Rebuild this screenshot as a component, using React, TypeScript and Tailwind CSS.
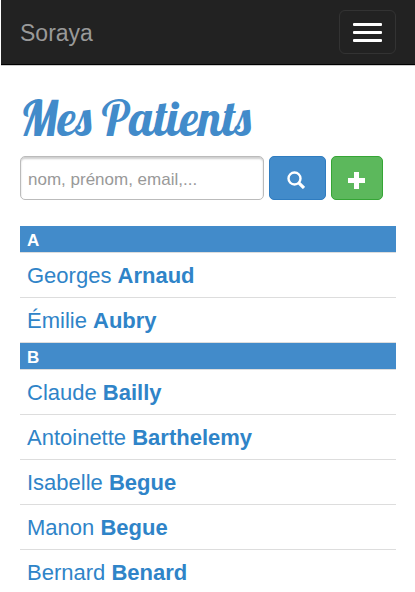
import { useState } from "react";

type Patient = { first: string; last: string };

const groups: { letter: string; patients: Patient[] }[] = [
  {
    letter: "A",
    patients: [
      { first: "Georges", last: "Arnaud" },
      { first: "Émilie", last: "Aubry" },
    ],
  },
  {
    letter: "B",
    patients: [
      { first: "Claude", last: "Bailly" },
      { first: "Antoinette", last: "Barthelemy" },
      { first: "Isabelle", last: "Begue" },
      { first: "Manon", last: "Begue" },
      { first: "Bernard", last: "Benard" },
    ],
  },
];

function Navbar() {
  return (
    <nav className="ml-px flex h-[65px] items-center justify-between border-b border-black bg-[#222222] pr-[19px] pl-[19px] shadow-[0_1px_0_#cccccc]">
      <a href="#" className="pt-0.5 text-[23px] leading-7 text-[#999999]">
        Soraya
      </a>
      <button
        type="button"
        aria-label="Menu"
        className="flex h-11 w-[57px] flex-col items-center justify-center gap-[5px] rounded-md border border-[#333333]"
      >
        <span className="h-[3px] w-[29px] rounded-[1px] bg-white" />
        <span className="h-[3px] w-[29px] rounded-[1px] bg-white" />
        <span className="h-[3px] w-[29px] rounded-[1px] bg-white" />
      </button>
    </nav>
  );
}

function SearchBar() {
  const [query, setQuery] = useState("");

  return (
    <form className="mt-2.5 flex gap-[5px] pr-[13px]" onSubmit={(e) => e.preventDefault()}>
      <input
        type="text"
        aria-label="Rechercher un patient"
        placeholder="nom, prénom, email,..."
        value={query}
        onChange={(e) => setQuery(e.target.value)}
        className="h-11 min-w-0 flex-1 rounded-[5px] border border-[#bbbbbb] bg-white px-[7px] pt-[3px] text-[17px] text-[#555555] shadow-[inset_0_2px_2px_#cfcfcf] outline-none placeholder:text-[#999999]"
      />
      <button
        type="submit"
        aria-label="Rechercher"
        className="flex h-11 w-[57px] items-center justify-center rounded-[5px] border border-[#2f7cc0] bg-[#428bca]"
      >
        <svg viewBox="0 0 18 18" className="mt-1 mr-1 h-[18px] w-[18px]" fill="none" stroke="white">
          <circle cx="7.5" cy="7.5" r="6" strokeWidth="2.4" />
          <path d="M11.8 11.8L17 17" strokeWidth="3.2" />
        </svg>
      </button>
      <button
        type="button"
        aria-label="Ajouter un patient"
        className="flex h-11 w-[52px] items-center justify-center rounded-[5px] border border-[#35a535] bg-[#5cb85c]"
      >
        <svg viewBox="0 0 17 17" className="mt-1 mr-0.5 h-[17px] w-[17px]" fill="white">
          <path d="M6 0h5v6h6v5h-6v6H6v-6H0V6h6z" />
        </svg>
      </button>
    </form>
  );
}

export default function App() {
  return (
    <div className="min-h-screen bg-white font-['Liberation_Sans',Arial,sans-serif]">
      <Navbar />
      <main className="pt-[25px] pr-[19px] pl-5">
        <h1 className="font-['Lobster','Liberation_Serif',serif] text-[48px] leading-14 font-normal whitespace-nowrap text-[#428bca]">
          Mes Patients
        </h1>
        <SearchBar />
        <div className="mt-[26px]">
          {groups.map((group) => (
            <section key={group.letter}>
              <h2 className="border-b border-[#dddddd] bg-[#428bca] pt-1 pl-[7px] text-[17px] leading-[22px] font-bold text-white">
                {group.letter}
              </h2>
              <ul>
                {group.patients.map((patient) => (
                  <li key={patient.first + patient.last} className="border-b border-[#dddddd]">
                    <a
                      href="#"
                      className="block px-[7px] pt-[9px] pb-[7px] text-[22px] leading-7 text-[#2f84c8]"
                    >
                      {patient.first} <strong>{patient.last}</strong>
                    </a>
                  </li>
                ))}
              </ul>
            </section>
          ))}
        </div>
      </main>
    </div>
  );
}
